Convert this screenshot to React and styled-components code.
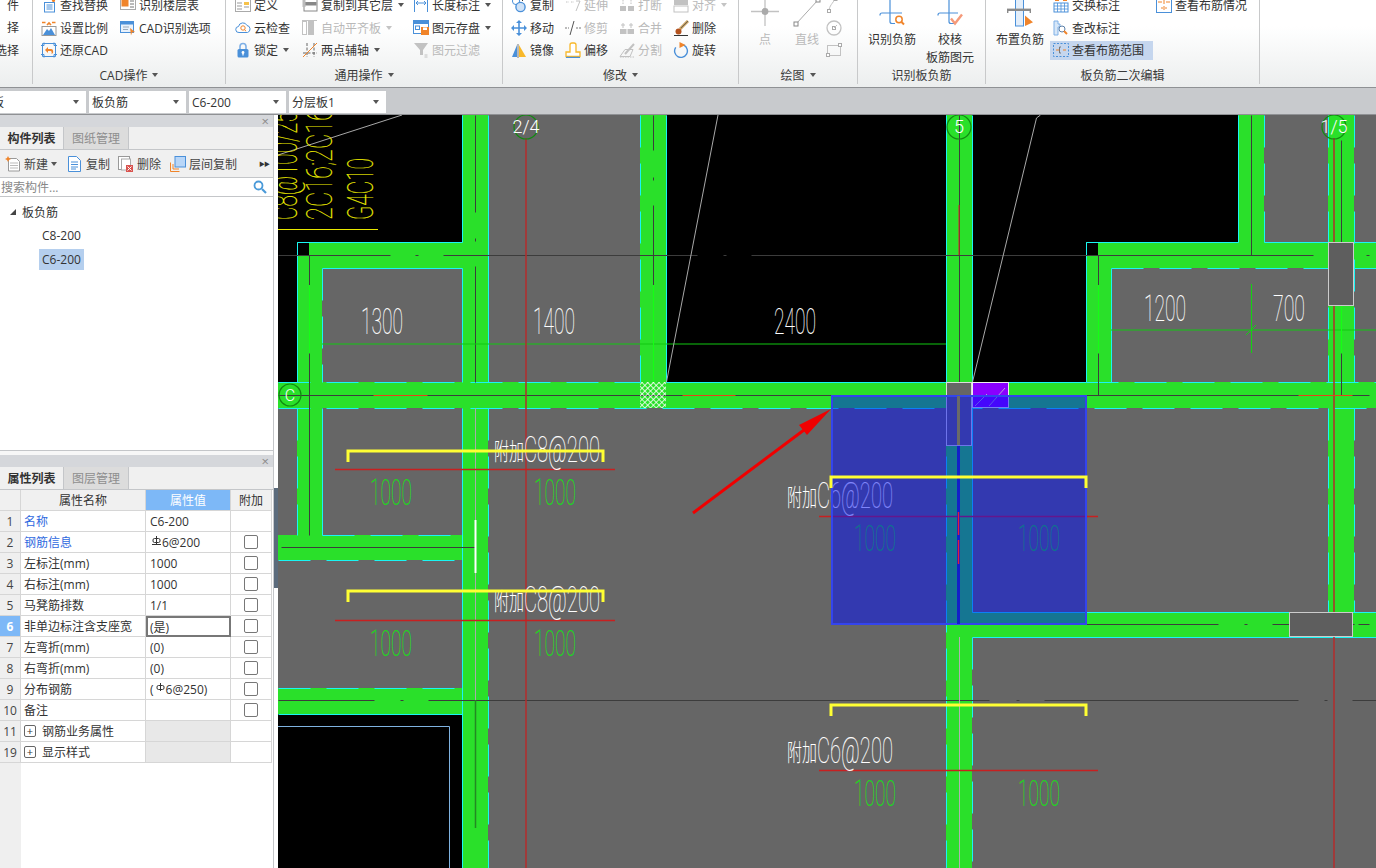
import React from "react";
import styled, { createGlobalStyle } from "styled-components";

const Global = createGlobalStyle`
  html, body { margin: 0; padding: 0; background: #fff; }
  body { font-family: "Open Sans", "Noto Sans CJK SC", sans-serif; font-size: 12px; color: #333; }
  * { box-sizing: border-box; }
`;

const B = "#4a90d9", O = "#f0842a", G = "#c2c2c2";

const ICONS = {
  find: <><rect x="3.5" y="5.5" width="10" height="9.5" stroke={B} fill="#fff" /><path d="M5.5 8h6M5.5 10h6M5.5 12h6" stroke={B} /><circle cx="12.5" cy="3.5" r="1.6" fill={O} /></>,
  floorTable: <><rect x=".5" y=".5" width="15" height="12" stroke="#aaa" fill="#fff" /><rect x="1.5" y="1.5" width="7" height="8" fill={O} /><path d="M10 4h4M10 7h4M10 10h4" stroke="#777" /></>,
  scale: <><path d="M1 2.5h3.5M11 2.5h3.5M6 5l2-2 2 2" stroke={O} strokeWidth="1.6" /><rect x="1" y="6.5" width="14" height="9" stroke="#999" fill="#fff" /><path d="M2 15l4-6 2 2 2-3 4 7z" fill={B} /></>,
  cadOpt: <><rect x=".5" y="1.5" width="13" height="11" stroke={B} fill="#e8f1fb" /><rect x="1" y="2" width="12" height="2.5" fill={B} /><path d="M3 7h6M3 9.5h5" stroke="#9ab" /><path d="M10 8l5 4-3 .5-1 3z" fill={O} /></>,
  restore: <><path d="M1.5 1.5h13v13h-13z" stroke={B} /><path d="M0 3.5h3v-3M13 .5v3h3M16 12.5h-3v3M3 15.5v-3H0" stroke={B} /><path d="M4 8l3-3v2h3c2 0 2.5 2 2 4l-1.5 1c.5-2 0-3-1-3H7v2z" fill={O} /></>,
  define: <><rect x=".5" y="2.5" width="15" height="12" stroke="#aaa" fill="#fff" /><rect x="9" y="5" width="5" height="3" fill="#f7c24a" /><path d="M2 6h5M2 9h5M9 10h5M2 12h5" stroke="#999" /></>,
  copyFloor: <><rect x="2" y="2" width="13" height="12" stroke="#888" fill="#fff" /><rect x="2.5" y="5" width="12" height="3.5" fill="#888" /><rect x=".5" y="1" width="3" height="9" fill="#bbb" /></>,
  lengthMark: <><path d="M1.5 1v14M14.5 1v14" stroke={B} /><path d="M3 6h10M5 4L3 6l2 2M11 4l2 2-2 2" stroke={B} /></>,
  cloud: <><path d="M4 12.5a3 3 0 0 1-.5-6 4.5 4.5 0 0 1 8.5-1 3.6 3.6 0 0 1 .5 7z" stroke={B} fill="#fff" /><circle cx="8" cy="8" r="2.2" stroke={O} /><path d="M9.5 9.8l1.6 1.4" stroke={O} /></>,
  autoAlign: <><rect x=".5" y="1.5" width="4" height="13" stroke={G} fill="#fff" /><rect x="6" y="1" width="6" height="14" fill={G} /><path d="M0 .5h15" stroke={G} /></>,
  saveEl: <><rect x=".5" y=".5" width="15" height="13" stroke={B} fill="#fff" /><rect x="1" y="1" width="14" height="3" fill={B} /><rect x="2.5" y="6" width="4" height="3.5" stroke={B} /><rect x="8" y="7" width="8" height="8" fill={O} /><rect x="10" y="7.5" width="4" height="2.5" fill="#fff" /></>,
  lock: <><path d="M5 7V4.5a3 3 0 0 1 6 0V7" stroke="#7fb0e6" strokeWidth="1.6" /><rect x="2.5" y="7" width="11" height="8.5" rx="1.5" fill={B} /><circle cx="8" cy="10.5" r="1.4" fill="#fff" /><rect x="7.4" y="11" width="1.2" height="2.5" fill="#fff" /></>,
  twoPoint: <><path d="M5 1v14M12 1v14M1 11h14" stroke="#666" strokeDasharray="3 1.5" /><path d="M1 15L15 1" stroke={O} /></>,
  filter: <><path d="M1 1h14L10 8v5H7V8z" fill={G} /><path d="M11.5 13h3M11.5 15h3" stroke={G} /></>,
  copy: <><circle cx="5" cy="4" r="3.6" stroke={B} fill="#fff" /><circle cx="9.5" cy="10" r="4.6" stroke={B} strokeWidth="1.4" fill="#cfe2f7" /><path d="M9 1l3 3" stroke="#333" /></>,
  extend: <><path d="M1 5h3M6 5h3" stroke={G} strokeDasharray="1.5 1" /><path d="M11 4h4l-4 10" stroke={G} /></>,
  breakEl: <><rect x="1" y="9" width="6" height="5" fill={G} /><rect x="9" y="9" width="6" height="5" fill={G} /><path d="M4 3v4M12 3v4" stroke={G} strokeDasharray="1.5 1" /></>,
  alignEl: <><rect x="1" y="1" width="14" height="7" fill={G} /><rect x="1" y="9" width="14" height="6" stroke={G} /></>,
  move: <><path d="M1 8h14M8 1v14" stroke={B} strokeWidth="1.6" /><path d="M8 0l3 3H5zM8 16l-3-3h6zM0 8l3-3v6zM16 8l-3 3V5z" fill={B} /></>,
  trim: <><path d="M0 8h4M11 8h5" stroke="#777" strokeDasharray="2 1" /><path d="M9 1L5 15" stroke="#555" /></>,
  merge: <><rect x="1" y="9" width="14" height="5" fill={G} /><path d="M4 3v5M12 3v5M2 5h4M10 5h4" stroke={G} /><path d="M8 9v5" stroke="#fff" /></>,
  del: <><path d="M1 15.5h14" stroke="#333" /><path d="M7 9l8-8" stroke="#c9a15f" strokeWidth="3" /><path d="M8 8l7-7" stroke="#555" strokeWidth=".8" /><circle cx="5.5" cy="11.5" r="3" fill="#b4531f" /></>,
  mirror: <><path d="M7 2v14" stroke="#777" /><path d="M6 3v12H1z" fill={B} /><path d="M8 3v12h7z" fill="#f8b82a" /></>,
  offset: <><path d="M1 14.5V10h4V3a2 2 0 0 1 2-2h2a2 2 0 0 1 2 2v7h4v4.5z" stroke="#f8b82a" strokeWidth="1.3" fill="#fff" /><path d="M1 15.5h14" stroke={B} strokeWidth="1.4" /></>,
  split: <><path d="M1 14.5l5-7h8l-3 7z" stroke={G} /><path d="M6 12L15 2" stroke={G} strokeWidth="2" /><path d="M1 15h14" stroke={G} strokeDasharray="1.5 1" /></>,
  rotate: <><circle cx="8" cy="9" r="6.4" stroke={B} strokeWidth="1.4" strokeDasharray="30 6" transform="rotate(-60 8 9)" /><path d="M6.5 0l6 3-6 3z" fill={O} /></>,
  arcSm: <><path d="M3 14c0-5 4-8 6-12" stroke={G} /><rect x="1.5" y="12.5" width="3" height="3" stroke="#aaa" fill="#fff" /><rect x="8" y=".5" width="3" height="3" stroke="#aaa" fill="#fff" /></>,
  circSm: <><circle cx="8" cy="8" r="7" stroke={G} strokeWidth="1.3" /><rect x="6.5" y="6.5" width="3" height="3" stroke="#aaa" /><path d="M8 8l3-3" stroke={G} /></>,
  rectSm: <><rect x="1.5" y="3.5" width="13" height="10" stroke={G} /><rect x=".5" y="11.5" width="3" height="3" stroke="#aaa" fill="#fff" /><rect x="12.5" y="1.5" width="3" height="3" stroke="#aaa" fill="#fff" /></>,
  swapMark: <><rect x="1" y="6" width="14" height="9" stroke={B} fill="#fff" /><path d="M1 9h14M1 12h14M4.5 6v9M8 6v9M11.5 6v9" stroke={B} strokeWidth=".8" /><rect x="2" y="0" width="4" height="4" fill={O} /><rect x="10" y="0" width="4" height="4" fill={O} /></>,
  editMark: <><path d="M1 1h4v3h2v3H5v8H1z" stroke="#7fb0e6" fill="#d7e7f8" /><circle cx="9" cy="9" r="3" stroke="#5a7fa8" fill="#fff" /><path d="M11 11l3 3" stroke={O} strokeWidth="2" /></>,
  viewRange: <><rect x=".5" y="1.5" width="15" height="13" stroke={B} strokeDasharray="2 1.5" /><path d="M3 8h3M10 8h3" stroke={O} /><path d="M8 5H6.5v6H8" stroke="#777" /></>,
  viewState: <><rect x=".5" y=".5" width="15" height="15" stroke={B} fill="#fff" /><path d="M2 5h4M10 5h4M8 3v4M5 11h2M9 11h2M8 9v4" stroke={O} /></>,
  newDoc: <><path d="M3.5 2.5h8l3 3v9.5h-11z" stroke="#999" fill="#fff" /><path d="M5 7h8M5 9.5h8M5 12h8" stroke="#bbb" /><path d="M3 0l1 2 2 1-2 1-1 2-1-2-2-1 2-1z" fill={O} /></>,
  docCopy: <><path d="M1.5 .5h8l4 4v11h-12z" stroke={B} fill="#fff" /><path d="M4 6h7M4 8.5h7M4 11h7M4 13h5" stroke={B} /></>,
  docDel: <><rect x=".5" y=".5" width="11" height="13" stroke="#999" fill="#fff" /><rect x="3.5" y="3" width="9" height="11" stroke="#aaa" fill="#fff" /><rect x="8" y="9" width="7" height="7" fill="#d9534f" /><path d="M9.5 10.5l4 4M13.5 10.5l-4 4" stroke="#fff" /></>,
  floorCopy: <><path d="M.5 15.5v-9M.5 15.5h9M3 13V8M3 13h6" stroke={O} /><rect x="5" y=".5" width="10.5" height="10.5" stroke={B} fill="#b8d6f8" /></>,
  search: <><circle cx="6.5" cy="6.5" r="4" stroke="#4a9ad9" strokeWidth="1.8" /><path d="M10 10l4 4" stroke="#4a9ad9" strokeWidth="2.2" /></>,
};

const BIG = {
  point: <><path d="M2 15.5h28M16 2v28" stroke={G} strokeWidth="1.3" /><circle cx="16" cy="15.5" r="3.4" fill="#aaa" /></>,
  line: <><path d="M5 28L27 4" stroke="#aaa" /><rect x="3" y="26" width="4" height="4" stroke="#888" fill="#fff" /><rect x="25" y="2" width="4" height="4" stroke="#888" fill="#fff" /></>,
  recog: <><path d="M14 0v25.5a2 2 0 0 0 2 2h3M4 19.5V19a2 2 0 0 1 2-2h20" stroke={B} strokeWidth="1.2" /><circle cx="23" cy="23.5" r="3.2" stroke={O} strokeWidth="1.5" /><path d="M25.5 26l2.5 2.5" stroke={O} strokeWidth="2" /></>,
  check: <><path d="M15 0v25.5a2 2 0 0 0 2 2h3M4 19.5V19a2 2 0 0 1 2-2h18" stroke={B} strokeWidth="1.2" /><path d="M17 22.5l4 5 7-9" stroke="#f59a7a" strokeWidth="2.4" /></>,
  place: <><rect x="11.5" y="-2" width="8" height="32" stroke={B} fill="#e3eefa" /><path d="M3 13.8h24" stroke="#8a8a8a" strokeWidth="2.4" /><path d="M3.7 14v3M26.3 14v3" stroke="#8a8a8a" strokeWidth="1.4" /><path d="M21 19.5l8 6.7-8 3.8z" fill={O} /></>,
};

const IconSvg = styled.svg`flex: none; display: block;`;
const Ic = ({ n }) => <IconSvg width="16" height="16" viewBox="0 0 16 16" fill="none">{ICONS[n]}</IconSvg>;

const Page = styled.div`width: 1376px; height: 868px; display: flex; flex-direction: column; overflow: hidden;`;
const Ribbon = styled.header`
  flex: none; height: 88px; display: flex; border-bottom: 1px solid #8f9194;
  background: linear-gradient(#fff 0, #fff 30%, #eceeee 100%);
`;
const Group = styled.section`
  flex: none; width: ${p => p.$w}px; height: 84px; overflow: hidden; display: flex; flex-direction: column;
  justify-content: flex-end; border-right: 1px solid #c8c9ca;
`;
const GroupBody = styled.div`display: flex; align-items: flex-end; padding-left: ${p => p.$pad || 0}px;`;
const GroupLabel = styled.div`
  flex: none; height: 24.5px; padding-top: 6px; display: flex; align-items: center; justify-content: center; gap: 5px; color: #3a3a3a;
`;
const Caret = styled.i`
  display: inline-block; flex: none; width: 0; height: 0; border: 3.5px solid transparent; border-bottom-width: 0;
  border-top: 4px solid ${p => p.$muted ? "#c4c4c4" : "#555"};
`;
const Col = styled.div`display: flex; flex-direction: column; gap: 3.5px; flex: none; width: ${p => p.$w}px;`;
const Item = styled.div`
  height: 19px; display: flex; align-items: center; gap: 3px; padding: 0 3px; white-space: nowrap;
  color: ${p => p.$off ? "#b9b9b9" : "#333"}; background: ${p => p.$on ? "#c5d6ee" : "transparent"};
`;
const ItemCaret = styled.span`display: inline-flex; margin-left: 2px;`;
const RightCol = styled(Col)`align-items: flex-end; padding-right: 13px;`;
const ClipText = styled.div`height: 19px; line-height: 19px; white-space: nowrap;`;
const BigBtn = styled.div`
  flex: none; width: ${p => p.$w}px; height: 64px; display: flex; flex-direction: column; align-items: center; align-self: flex-start;
  line-height: 18px; color: ${p => p.$off ? "#b9b9b9" : "#333"}; text-align: center;
`;
const BigIcon = styled.svg`flex: none; width: 32px; height: 35px; display: block; overflow: visible;`;
const Tool = ({ n, t, c, off, on }) => (
  <Item $off={off} $on={on}>
    {n && <Ic n={n} />}{t}
    {c && <ItemCaret><Caret $muted={off} /></ItemCaret>}
  </Item>
);
const Big = ({ n, lines, w, off }) => (
  <BigBtn $w={w} $off={off}>
    <BigIcon viewBox="0 0 32 35" fill="none">{BIG[n]}</BigIcon>
    {lines.map(l => <span key={l}>{l}</span>)}
  </BigBtn>
);

const SelectBar = styled.div`
  flex: none; height: 27px; display: flex; gap: 3px; padding-top: 3px; background: #c8cacd; border-bottom: 1px solid #8f9194;
`;
const Select = styled.div`
  width: ${p => p.$w}px; height: 22px; background: #fff; display: flex; align-items: center; justify-content: space-between;
  padding: 0 7px 0 3px; overflow: hidden;
`;
const SelectText = styled.span`margin-left: ${p => p.$shift || 0}px; white-space: nowrap;`;

const Main = styled.div`flex: 1; min-height: 0; display: flex;`;
const Sidebar = styled.aside`flex: none; width: 274px; display: flex; flex-direction: column; background: #f7f7f7; border-right: 1px solid #c4c6c9;`;
const Splitter = styled.div`flex: none; width: 4px; background: #fff; padding-top: 373px;`;
const SplitterThumb = styled.div`height: 100px; background: #5b6b7c;`;
const Panel = styled.section`
  display: flex; flex-direction: column; flex: ${p => p.$grow ? 1 : "none"}; height: ${p => p.$h ? p.$h + "px" : "auto"};
  background: #fff; min-height: 0;
`;
const PanelGap = styled.div`flex: none; height: 5px; background: #f7f7f7; border-top: 1px solid #c4c6c9;`;
const PanelTitle = styled.div`
  flex: none; height: 12px; background: #d5d7db; display: flex; align-items: center; justify-content: flex-end; padding-right: 4px;
  color: #8a8a8a; font-size: 13px; line-height: 12px;
`;
const Tabs = styled.div`flex: none; height: 23px; display: flex; background: #f0f0f0; border-bottom: 1px solid #c4c6c9;`;
const Tab = styled.div`
  width: ${p => p.$w}px; display: flex; align-items: center; justify-content: center; font-weight: ${p => p.$on ? 700 : 400};
  color: ${p => p.$on ? "#333" : "#8e8e8e"}; background: ${p => p.$on ? "#f0f0f0" : "#dcdcdc"};
  border-right: 1px solid #c4c6c9;
`;
const PanelBar = styled.div`
  flex: none; height: 28px; display: flex; align-items: center; padding: 0 3px 0 5px; background: #f0f0f0; border-bottom: 1px solid #c4c6c9; color: #444;
`;
const BarBtn = styled.div`display: flex; align-items: center; gap: 3px; margin-right: ${p => p.$mr}px;`;
const MoreArrows = styled.span`margin-left: auto; font-size: 6px; letter-spacing: -1px; color: #333; padding-right: 1px;`;
const Search = styled.div`
  flex: none; height: 19px; display: flex; align-items: center; justify-content: space-between; padding: 0 5px 0 1px; color: #888;
  border-bottom: 1px solid #c4c6c9; background: #fff;
`;
const Tree = styled.div`flex: 1; padding-top: 3.5px; background: #fff;`;
const TreeRow = styled.div`height: 23.5px; display: flex; align-items: center; padding-left: ${p => p.$pad}px; gap: 6px;`;
const TreeLeaf = styled.span`padding: 0 3px; height: 21px; line-height: 21px; background: ${p => p.$on ? "#b5cfee" : "transparent"};`;
const TreeMark = styled.i`width: 0; height: 0; border-style: solid; border-width: 0 0 6px 6px; border-color: transparent transparent #444 transparent;`;

const TableWrap = styled.div`flex: 1; min-height: 0; display: flex; flex-direction: column; background: linear-gradient(90deg, #efefef 21px, #fff 21px);`;
const TRow = styled.div`display: grid; grid-template-columns: 21px 125px 85px 41px; height: 21px; flex: none;`;
const Cell = styled.div`
  display: flex; align-items: center; overflow: hidden; white-space: nowrap; padding-left: 3px;
  border-right: 1px solid #d6d6d6; border-bottom: 1px solid #d6d6d6;
  background: ${p => p.$bg || "#fff"}; color: ${p => p.$c || "#333"};
`;
const ValueCell = styled(Cell)`padding-left: 4px;`;
const HeadCell = styled(Cell)`justify-content: center; padding: 0; background: ${p => p.$bg || "#f0f0f0"};`;
const NumCell = styled(Cell)`
  justify-content: center; padding: 0; font-weight: ${p => p.$on ? 700 : 400};
  background: ${p => p.$on ? "#7db8f7" : "#efefef"}; color: ${p => p.$on ? "#fff" : "#444"};
`;
const EditCell = styled(Cell)`border: 2px solid #777; padding-left: 2px;`;
const CheckCell = styled(Cell)`justify-content: center; padding: 0;`;
const Check = styled.span`width: 14px; height: 14px; border: 1px solid #777; border-radius: 2px; background: #fff;`;
const Plus = styled.span`
  flex: none; width: 12px; height: 12px; border: 1px solid #666; border-radius: 2px; margin-right: 6px; display: flex;
  align-items: center; justify-content: center; font-size: 11px; line-height: 10px; color: #333;
`;
const SteelSvg = styled.svg`flex: none; display: block; margin: -3px 1px 0 2px;`;
const Steel = ({ foot }) => (
  <SteelSvg width="9" height="10" viewBox="0 0 9 10" fill="none" stroke="#333">
    <rect x="1" y="2.5" width="7" height="4" rx="1.5" /><path d="M4.5 0v8" />{foot && <path d="M0 8.5h9" />}
  </SteelSvg>
);

const CanvasWrap = styled.main`flex: 1; min-width: 0; background: #666; overflow: hidden;`;
const CadSvg = styled.svg`display: block;`;

const GREEN = "#2ae02a", CYAN = "#19f5f5", DARK = "#3c3c3c", AXIS = "#b42c2c";

const BLACKS = [[278, 115, 184, 127], [278, 242, 19, 140], [667, 115, 279, 267], [972, 115, 266, 127], [972, 242, 114, 140], [278, 714, 184, 154]];
const GREENS = [
  [278, 382, 1098, 26], [462, 115, 26, 753], [640, 115, 26, 293], [946, 115, 26, 753], [1328, 115, 26, 522], [297, 242, 165, 26],
  [297, 242, 25, 140], [297, 408, 25, 127], [278, 535, 184, 25], [1086, 242, 25, 166], [1086, 242, 242, 26], [1238, 115, 26, 127],
  [1354, 242, 22, 26], [959, 612, 417, 25], [278, 688, 184, 26],
];
const CYANS = [
  [462, 115, 462, 242], [488, 115, 488, 382], [640, 115, 640, 382, 1], [666, 115, 666, 382], [946, 115, 946, 382], [972, 115, 972, 382],
  [1238, 115, 1238, 242], [1264, 115, 1264, 242, 1], [1328, 115, 1328, 382, 1], [1354, 115, 1354, 382, 1],
  [297, 242, 462, 242], [297, 242, 297, 382], [322, 268, 462, 268], [322, 268, 322, 382, 1], [462, 268, 462, 382],
  [1086, 242, 1238, 242], [1086, 242, 1086, 382], [1264, 242, 1376, 242], [1111, 268, 1328, 268, 1], [1354, 268, 1376, 268], [1111, 268, 1111, 382],
  [278, 382, 640, 382, 1], [666, 382, 1086, 382], [1086, 382, 1376, 382, 1], [278, 408, 1376, 408, 1], [462, 408, 462, 868], [488, 408, 488, 868, 1], [297, 408, 297, 535, 1], [322, 408, 322, 535],
  [322, 535, 462, 535, 1], [278, 560, 462, 560, 1], [278, 688, 462, 688, 1], [278, 714, 462, 714], [946, 408, 946, 868, 1], [972, 408, 972, 612],
  [972, 612, 1376, 612], [972, 637, 1376, 637], [972, 637, 972, 868, 1], [1328, 408, 1328, 612, 1], [1354, 408, 1354, 612, 1],
];
const DARKS = [
  [278, 255, 390, 255], [415, 255, 418, 255], [443, 255, 697, 255], [723, 255, 726, 255], [751, 255, 1313, 255], [1366, 255, 1369, 255],
  [278, 395, 1369, 395], [278, 700, 374, 700], [400, 700, 403, 700], [428, 700, 989, 700], [1016, 700, 1019, 700], [1044, 700, 1298, 700], [1324, 700, 1327, 700], [1352, 700, 1376, 700],
  [960, 624, 1218, 624], [1244, 624, 1247, 624], [1272, 624, 1354, 624], [1358, 624, 1369, 624], [281, 547, 475, 547],
  [309, 255, 309, 285], [309, 353, 309, 535], [475, 115, 475, 212], [475, 238, 475, 241], [475, 266, 475, 382],
  [653, 115, 653, 150], [653, 177, 653, 180], [653, 205, 653, 382], [959, 115, 959, 382], [1098, 255, 1098, 285], [1098, 353, 1098, 395],
  [1251, 115, 1251, 255], [1341, 140, 1341, 242], [1341, 353, 1341, 395],
];
const ORANGES = [[373, 395, 427, 395], [682, 395, 735, 395], [1298, 395, 1352, 395], [990, 395, 1040, 395]];
const BRACKETS = [[348, 603, 451], [348, 603, 591], [831, 1086, 477], [831, 1086, 705]];
const REDS = [[335, 615, 469], [335, 615, 620], [819, 1098, 516], [819, 1098, 770]];
const LENGTHS = [[370, 492], [534, 492], [370, 643], [534, 643], [854, 538], [1018, 538], [854, 793], [1018, 793]];
const NOTES = [[494, "C8@200", 462], [494, "C8@200", 612], [787, "C6@200", 508], [787, "C6@200", 763]];
const DIMS = [[361, 334, "1300", 42], [533, 334, "1400", 42], [774, 334, "2400", 42], [1144, 321, "1200", 42], [1273, 321, "700", 32]];

const Seg = ({ s, c, w = 1, dash }) => <line x1={s[0]} y1={s[1]} x2={s[2]} y2={s[3]} stroke={c} strokeWidth={w} strokeDasharray={dash} />;
const Thin = ({ x, y, len, size = 36, children, fill = "#fff", ...rest }) => (
  <text x={x} y={y} fill={fill} stroke={fill} strokeWidth=".15" fontFamily="Roboto, sans-serif" fontWeight="100" fontSize={size} textLength={len} lengthAdjust="spacingAndGlyphs" {...rest}>{children}</text>
);
const AxisMark = ({ x, y, t, r = 12, size = 18 }) => (
  <g>
    <circle cx={x} cy={y} r={r} fill="none" stroke="#128a12" strokeWidth="1.2" />
    <text x={x} y={y + size * 0.36} textAnchor="middle" fill="#fff" fontFamily="Roboto, sans-serif" fontWeight="300" fontSize={size}>{t}</text>
  </g>
);
const Rotated = ({ x, t, len, size = 36 }) => (
  <text transform={`translate(${x} 220) rotate(-90)`} fill="#eeee00" stroke="#eeee00" strokeWidth=".15" fontFamily="Roboto, sans-serif" fontWeight="100" fontSize={size} textLength={len} lengthAdjust="spacingAndGlyphs">{t}</text>
);

const Cad = () => (
  <CadSvg width="1098" height="753" viewBox="278 115 1098 753">
    <defs>
      <pattern id="hatch" width="4" height="4" patternUnits="userSpaceOnUse" patternTransform="rotate(45)">
        <path d="M0 0h4M0 0v4" stroke="#fff" strokeWidth="1.6" />
      </pattern>
    </defs>
    <rect x="278" y="115" width="1098" height="753" fill="#666" />
    {BLACKS.map(r => <rect key={r.join()} x={r[0]} y={r[1]} width={r[2]} height={r[3]} fill="#000" />)}
    <path d="M278 726.5h171.5V868" fill="none" stroke="#7fb2e0" />
    {GREENS.map(r => <rect key={r.join()} x={r[0]} y={r[1]} width={r[2]} height={r[3]} fill={GREEN} />)}
    <rect x="297" y="243" width="12" height="12" fill="#000" />
    <rect x="1086" y="243" width="12" height="12" fill="#000" />
    {CYANS.map(s => <Seg key={s.join()} s={s.slice(0, 4).map(v => v + 0.5)} c={CYAN} dash={s[4] ? "32 16" : undefined} />)}
    {DARKS.map(s => <Seg key={s.join()} s={s.map(v => v + 0.5)} c={DARK} />)}
    <line x1="475.5" y1="408" x2="475.5" y2="700" stroke="#aaa" />
    <line x1="475.5" y1="700" x2="475.5" y2="828" stroke="#238a23" strokeWidth="1.5" />
    <line x1="475.5" y1="520" x2="475.5" y2="573" stroke="#fff" strokeWidth="2" />
    <line x1="959.5" y1="637" x2="959.5" y2="868" stroke="#b0b0b0" />
    <line x1="322" y1="344" x2="946" y2="344" stroke="#10c810" />
    <line x1="1111" y1="330" x2="1376" y2="330" stroke="#10c810" />
    <line x1="1251.5" y1="284" x2="1251.5" y2="353" stroke="#12d212" />
    <line x1="1246" y1="335" x2="1256" y2="325" stroke="#12d212" />
    <line x1="309.5" y1="285" x2="309.5" y2="353" stroke="#14ff14" />
    <line x1="1098.5" y1="285" x2="1098.5" y2="353" stroke="#14ff14" />
    <line x1="1341.5" y1="284" x2="1341.5" y2="353" stroke="#14ff14" />
    <line x1="653.5" y1="285" x2="653.5" y2="382" stroke="#14ff14" />
    <line x1="526" y1="138" x2="526" y2="868" stroke={AXIS} strokeWidth="1.5" />
    <line x1="1334" y1="138" x2="1334" y2="868" stroke={AXIS} strokeWidth="1.5" />
    <line x1="959" y1="205" x2="959" y2="255" stroke="#d22" />
    <line x1="666.5" y1="382" x2="718" y2="115" stroke="#a8a8a8" />
    <path d="M972.5 382L1036.5 118l4-3" fill="none" stroke="#a8a8a8" />
    <line x1="278" y1="155" x2="402" y2="115" stroke="#a8a8a8" />
    {ORANGES.map(s => <Seg key={s.join()} s={s.map(v => v + 0.5)} c="#e8401a" />)}
    <rect x="640" y="382" width="26" height="26" fill="url(#hatch)" />
    <rect x="946.5" y="382.5" width="25" height="63" fill="#666" stroke="#ddd" />
    <rect x="972.5" y="382.5" width="36" height="25" fill="#8a00ff" stroke="#eee" />
    <path d="M975 406l12-12M989 406l16-18" stroke="#b9a0d8" fill="none" />
    <rect x="1328.5" y="242.5" width="25" height="63" fill="#5e5e5e" stroke="#ccc" />
    <rect x="1289.5" y="612.5" width="63" height="24" fill="#5e5e5e" stroke="#ccc" />
    <Rotated x={297} t="C8@100/250" len={120} />
    <Rotated x={332} t="2C16;2C16" len={112} />
    <Rotated x={373} t="G4C10" len={62} />
    <line x1="278" y1="229.5" x2="378" y2="229.5" stroke="#e8e800" />
    {DIMS.map(d => <Thin key={d[2] + d[0]} x={d[0]} y={d[1]} len={d[3]}>{d[2]}</Thin>)}
    {REDS.map(r => <line key={r.join()} x1={r[0]} y1={r[2] + 0.5} x2={r[1]} y2={r[2] + 0.5} stroke="#c82020" strokeWidth="1.4" />)}
    {LENGTHS.map(l => <Thin key={l.join()} x={l[0]} y={l[1] + 13} len={42} fill="#14e014">1000</Thin>)}
    {NOTES.map(n => (
      <g key={n[0] + "," + n[2]}>
        <text x={n[0]} y={n[2] - 2} fill="#fff" fontFamily="'Noto Sans CJK SC', sans-serif" fontWeight="300" fontSize="24" textLength="30" lengthAdjust="spacingAndGlyphs">附加</text>
        <Thin x={n[0] + 30} y={n[2]} len={76}>{n[1]}</Thin>
      </g>
    ))}
    <AxisMark x={526} y={127} t="2/4" />
    <AxisMark x={959} y={127} t="5" />
    <AxisMark x={1334} y={127} t="1/5" />
    <AxisMark x={290} y={395} t="C" r={11} size={16} />
    <rect x="832" y="396" width="254" height="228" fill="rgba(0,12,250,.5)" stroke="#3344ee" strokeWidth="2" />
    <rect x="957" y="396" width="3" height="49" fill="#6a6a6a" />
    <rect x="957" y="446" width="3" height="178" fill="#1320c8" />
    <path d="M958.5 512v23M958.5 540v24" stroke="#e02038" strokeWidth="1.4" />
    {BRACKETS.map(b => <path key={b.join()} d={`M${b[0]} ${b[2] + 11}V${b[2]}H${b[1]}V${b[2] + 11}`} fill="none" stroke="#ffff33" strokeWidth="3" />)}
    <line x1="693" y1="513" x2="808" y2="427" stroke="#f00000" strokeWidth="3" />
    <path d="M831 409L799 425l8 10z" fill="#f00000" />
  </CadSvg>
);

const ROWS = [
  { k: 1, name: "名称", val: "C6-200", blue: true, noCheck: true },
  { k: 2, name: "钢筋信息", val: <><Steel foot />6@200</>, blue: true },
  { k: 3, name: "左标注(mm)", val: "1000" },
  { k: 4, name: "右标注(mm)", val: "1000" },
  { k: 5, name: "马凳筋排数", val: "1/1" },
  { k: 6, name: "非单边标注含支座宽", val: "(是)", sel: true },
  { k: 7, name: "左弯折(mm)", val: "(0)" },
  { k: 8, name: "右弯折(mm)", val: "(0)" },
  { k: 9, name: "分布钢筋", val: <>(<Steel />6@250)</> },
  { k: 10, name: "备注", val: "" },
  { k: 11, name: "钢筋业务属性", group: true },
  { k: 19, name: "显示样式", group: true },
];

export default function App() {
  return (
    <Page>
      <Global />
      <Ribbon>
        <Group $w={33}>
          <GroupBody>
            <RightCol $w={32}>
              <ClipText>件</ClipText>
              <ClipText>择</ClipText>
              <ClipText>选择</ClipText>
            </RightCol>
          </GroupBody>
          <GroupLabel />
        </Group>
        <Group $w={193}>
          <GroupBody $pad={5}>
            <Col $w={79}>
              <Tool n="find" t="查找替换" />
              <Tool n="scale" t="设置比例" />
              <Tool n="restore" t="还原CAD" />
            </Col>
            <Col $w={100}>
              <Tool n="floorTable" t="识别楼层表" />
              <Tool n="cadOpt" t="CAD识别选项" />
              <Item />
            </Col>
          </GroupBody>
          <GroupLabel>CAD操作<Caret /></GroupLabel>
        </Group>
        <Group $w={277}>
          <GroupBody $pad={6}>
            <Col $w={67}>
              <Tool n="define" t="定义" />
              <Tool n="cloud" t="云检查" />
              <Tool n="lock" t="锁定" c />
            </Col>
            <Col $w={111}>
              <Tool n="copyFloor" t="复制到其它层" c />
              <Tool n="autoAlign" t="自动平齐板" c off />
              <Tool n="twoPoint" t="两点辅轴" c />
            </Col>
            <Col $w={90}>
              <Tool n="lengthMark" t="长度标注" c />
              <Tool n="saveEl" t="图元存盘" c />
              <Tool n="filter" t="图元过滤" off />
            </Col>
          </GroupBody>
          <GroupLabel>通用操作<Caret /></GroupLabel>
        </Group>
        <Group $w={236}>
          <GroupBody $pad={5}>
            <Col $w={54}>
              <Tool n="copy" t="复制" />
              <Tool n="move" t="移动" />
              <Tool n="mirror" t="镜像" />
            </Col>
            <Col $w={54}>
              <Tool n="extend" t="延伸" off />
              <Tool n="trim" t="修剪" off />
              <Tool n="offset" t="偏移" />
            </Col>
            <Col $w={54}>
              <Tool n="breakEl" t="打断" off />
              <Tool n="merge" t="合并" off />
              <Tool n="split" t="分割" off />
            </Col>
            <Col $w={60}>
              <Tool n="alignEl" t="对齐" c off />
              <Tool n="del" t="删除" />
              <Tool n="rotate" t="旋转" />
            </Col>
          </GroupBody>
          <GroupLabel>修改<Caret /></GroupLabel>
        </Group>
        <Group $w={119}>
          <GroupBody>
            <Big n="point" lines={["点"]} w={52} off />
            <Big n="line" lines={["直线"]} w={32} off />
            <Col $w={24}>
              <Tool n="arcSm" />
              <Tool n="circSm" />
              <Tool n="rectSm" />
            </Col>
          </GroupBody>
          <GroupLabel>绘图<Caret /></GroupLabel>
        </Group>
        <Group $w={128}>
          <GroupBody>
            <Big n="recog" lines={["识别负筋"]} w={68} />
            <Big n="check" lines={["校核", "板筋图元"]} w={48} />
          </GroupBody>
          <GroupLabel>识别板负筋</GroupLabel>
        </Group>
        <Group $w={274}>
          <GroupBody $pad={4}>
            <Big n="place" lines={["布置负筋"]} w={60} />
            <Col $w={103}>
              <Tool n="swapMark" t="交换标注" />
              <Tool n="editMark" t="查改标注" />
              <Tool n="viewRange" t="查看布筋范围" on />
            </Col>
            <Col $w={100}>
              <Tool n="viewState" t="查看布筋情况" />
              <Item />
              <Item />
            </Col>
          </GroupBody>
          <GroupLabel>板负筋二次编辑</GroupLabel>
        </Group>
      </Ribbon>
      <SelectBar>
        <Select $w={86}><SelectText $shift={-11}>板</SelectText><Caret /></Select>
        <Select $w={97}><SelectText>板负筋</SelectText><Caret /></Select>
        <Select $w={97}><SelectText>C6-200</SelectText><Caret /></Select>
        <Select $w={97}><SelectText>分层板1</SelectText><Caret /></Select>
      </SelectBar>
      <Main>
        <Sidebar>
          <Panel $h={335}>
            <PanelTitle>×</PanelTitle>
            <Tabs>
              <Tab $w={64} $on>构件列表</Tab>
              <Tab $w={65}>图纸管理</Tab>
            </Tabs>
            <PanelBar>
              <BarBtn $mr={10}><Ic n="newDoc" />新建<Caret /></BarBtn>
              <BarBtn $mr={8}><Ic n="docCopy" />复制</BarBtn>
              <BarBtn $mr={9}><Ic n="docDel" />删除</BarBtn>
              <BarBtn $mr={0}><Ic n="floorCopy" />层间复制</BarBtn>
              <MoreArrows>▶▶</MoreArrows>
            </PanelBar>
            <Search>搜索构件...<Ic n="search" /></Search>
            <Tree>
              <TreeRow $pad={10}><TreeMark />板负筋</TreeRow>
              <TreeRow $pad={39}><TreeLeaf>C8-200</TreeLeaf></TreeRow>
              <TreeRow $pad={39}><TreeLeaf $on>C6-200</TreeLeaf></TreeRow>
            </Tree>
          </Panel>
          <PanelGap />
          <Panel $grow>
            <PanelTitle>×</PanelTitle>
            <Tabs>
              <Tab $w={64} $on>属性列表</Tab>
              <Tab $w={65}>图层管理</Tab>
            </Tabs>
            <TableWrap>
              <TRow>
                <HeadCell />
                <HeadCell>属性名称</HeadCell>
                <HeadCell $bg="#7db8f7" $c="#fff">属性值</HeadCell>
                <HeadCell>附加</HeadCell>
              </TRow>
              {ROWS.map(r => (
                <TRow key={r.k}>
                  <NumCell $on={r.sel}>{r.k}</NumCell>
                  <Cell $c={r.blue ? "#2f6ae0" : undefined}>
                    {r.group && <Plus>+</Plus>}{r.name}
                  </Cell>
                  {r.sel ? <EditCell>{r.val}</EditCell> : <ValueCell $bg={r.group ? "#e8e8e8" : undefined}>{r.val}</ValueCell>}
                  <CheckCell>{!r.noCheck && !r.group && <Check />}</CheckCell>
                </TRow>
              ))}
            </TableWrap>
          </Panel>
        </Sidebar>
        <Splitter><SplitterThumb /></Splitter>
        <CanvasWrap><Cad /></CanvasWrap>
      </Main>
    </Page>
  );
}
